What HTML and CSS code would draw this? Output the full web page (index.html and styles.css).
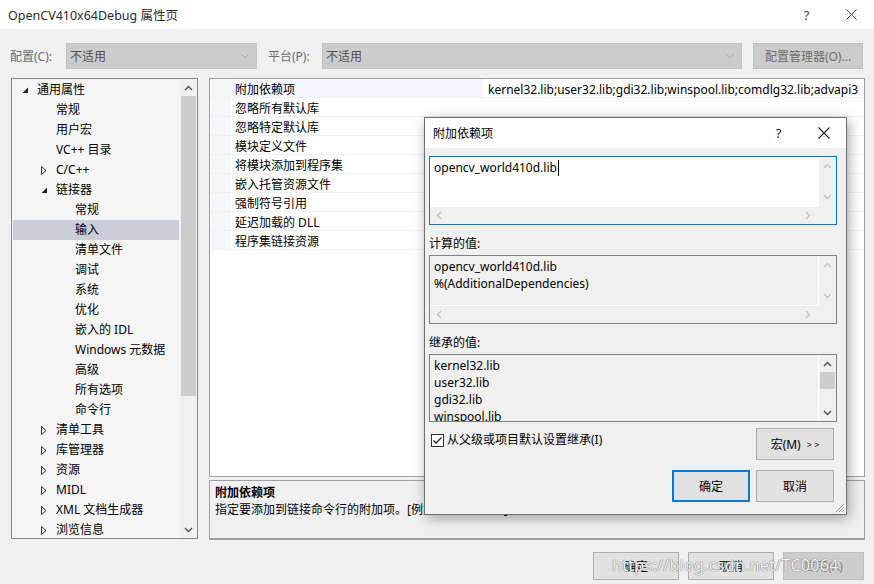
FILE: index.html
```html
<!DOCTYPE html>
<html>
<head>
<meta charset="utf-8">
<link rel="stylesheet" href="styles.css">
</head>
<body>
<div class="window">
  <div class="titlebar">
    <span class="title">OpenCV410x64Debug 属性页</span>
    <span class="cap-btn">?</span>
    <span class="cap-btn"><svg width="11" height="11" viewBox="0 0 11 11"><path d="M0.5 0.5 L10.5 10.5 M10.5 0.5 L0.5 10.5" stroke="#444" stroke-width="1" fill="none"/></svg></span>
  </div>

  <div class="toolbar">
    <span class="tlabel">配置(C):</span>
    <div class="select sel1"><span>不适用</span><svg width="8" height="5" viewBox="0 0 8 5"><path d="M0.5 0.5 L4 4 L7.5 0.5" stroke="#a8a8a8" fill="none"/></svg></div>
    <span class="tlabel tlabel2">平台(P):</span>
    <div class="select sel2"><span>不适用</span><svg width="8" height="5" viewBox="0 0 8 5"><path d="M0.5 0.5 L4 4 L7.5 0.5" stroke="#a8a8a8" fill="none"/></svg></div>
    <div class="tbtn">配置管理器(O)...</div>
  </div>

  <div class="main">
    <div class="tree">
      <div class="tree-list">
        <div class="trow l0"><span class="tw"><svg width="7" height="7" viewBox="0 0 7 7"><path d="M6 0.5 L6 6 L0.5 6 Z" fill="#222"/></svg></span><span>通用属性</span></div>
        <div class="trow l1"><span class="tw"></span><span>常规</span></div>
        <div class="trow l1"><span class="tw"></span><span>用户宏</span></div>
        <div class="trow l1"><span class="tw"></span><span>VC++ 目录</span></div>
        <div class="trow l1"><span class="tw"><svg width="6" height="9" viewBox="0 0 6 9"><path d="M0.5 0.5 L5 4.5 L0.5 8.5 Z" fill="none" stroke="#333"/></svg></span><span>C/C++</span></div>
        <div class="trow l1"><span class="tw"><svg width="7" height="7" viewBox="0 0 7 7"><path d="M6 0.5 L6 6 L0.5 6 Z" fill="#222"/></svg></span><span>链接器</span></div>
        <div class="trow l2"><span class="tw"></span><span>常规</span></div>
        <div class="trow l2 sel"><span class="tw"></span><span>输入</span></div>
        <div class="trow l2"><span class="tw"></span><span>清单文件</span></div>
        <div class="trow l2"><span class="tw"></span><span>调试</span></div>
        <div class="trow l2"><span class="tw"></span><span>系统</span></div>
        <div class="trow l2"><span class="tw"></span><span>优化</span></div>
        <div class="trow l2"><span class="tw"></span><span>嵌入的 IDL</span></div>
        <div class="trow l2"><span class="tw"></span><span>Windows 元数据</span></div>
        <div class="trow l2"><span class="tw"></span><span>高级</span></div>
        <div class="trow l2"><span class="tw"></span><span>所有选项</span></div>
        <div class="trow l2"><span class="tw"></span><span>命令行</span></div>
        <div class="trow l1"><span class="tw"><svg width="6" height="9" viewBox="0 0 6 9"><path d="M0.5 0.5 L5 4.5 L0.5 8.5 Z" fill="none" stroke="#333"/></svg></span><span>清单工具</span></div>
        <div class="trow l1"><span class="tw"><svg width="6" height="9" viewBox="0 0 6 9"><path d="M0.5 0.5 L5 4.5 L0.5 8.5 Z" fill="none" stroke="#333"/></svg></span><span>库管理器</span></div>
        <div class="trow l1"><span class="tw"><svg width="6" height="9" viewBox="0 0 6 9"><path d="M0.5 0.5 L5 4.5 L0.5 8.5 Z" fill="none" stroke="#333"/></svg></span><span>资源</span></div>
        <div class="trow l1"><span class="tw"><svg width="6" height="9" viewBox="0 0 6 9"><path d="M0.5 0.5 L5 4.5 L0.5 8.5 Z" fill="none" stroke="#333"/></svg></span><span>MIDL</span></div>
        <div class="trow l1"><span class="tw"><svg width="6" height="9" viewBox="0 0 6 9"><path d="M0.5 0.5 L5 4.5 L0.5 8.5 Z" fill="none" stroke="#333"/></svg></span><span>XML 文档生成器</span></div>
        <div class="trow l1"><span class="tw"><svg width="6" height="9" viewBox="0 0 6 9"><path d="M0.5 0.5 L5 4.5 L0.5 8.5 Z" fill="none" stroke="#333"/></svg></span><span>浏览信息</span></div>
      </div>
      <div class="vscroll">
        <div class="sarrow"><svg width="9" height="6" viewBox="0 0 9 6"><path d="M1 5 L4.5 1.5 L8 5" fill="none" stroke="#555" stroke-width="1.4"/></svg></div>
        <div class="sthumb"></div>
        <div class="sspace"></div>
        <div class="sarrow"><svg width="9" height="6" viewBox="0 0 9 6"><path d="M1 1 L4.5 4.5 L8 1" fill="none" stroke="#555" stroke-width="1.4"/></svg></div>
      </div>
    </div>

    <div class="rightcol">
      <div class="grid">
        <div class="grow first"><span class="gm"></span><span class="gl">附加依赖项</span><span class="gv">kernel32.lib;user32.lib;gdi32.lib;winspool.lib;comdlg32.lib;advapi3</span></div>
        <div class="grow"><span class="gm"></span><span class="gl">忽略所有默认库</span><span class="gv"></span></div>
        <div class="grow"><span class="gm"></span><span class="gl">忽略特定默认库</span><span class="gv"></span></div>
        <div class="grow"><span class="gm"></span><span class="gl">模块定义文件</span><span class="gv"></span></div>
        <div class="grow"><span class="gm"></span><span class="gl">将模块添加到程序集</span><span class="gv"></span></div>
        <div class="grow"><span class="gm"></span><span class="gl">嵌入托管资源文件</span><span class="gv"></span></div>
        <div class="grow"><span class="gm"></span><span class="gl">强制符号引用</span><span class="gv"></span></div>
        <div class="grow"><span class="gm"></span><span class="gl">延迟加载的 DLL</span><span class="gv"></span></div>
        <div class="grow"><span class="gm"></span><span class="gl">程序集链接资源</span><span class="gv"></span></div>
      </div>
      <div class="desc">
        <div class="desc-title">附加依赖项</div>
        <div>指定要添加到链接命令行的附加项。[例如 kernel32.lib]</div>
      </div>
    </div>
  </div>

  <div class="footer">
    <div class="btn fbtn">确定</div>
    <div class="btn fbtn">取消</div>
    <div class="btn fbtn disabled">应用(A)</div>
  </div>

  <div class="watermark">https://blog.csdn.net/TC0064</div>

  <div class="dialog">
    <div class="dlg-title">
      <span class="dlg-caption">附加依赖项</span>
      <span class="dlg-cap">?</span>
      <span class="dlg-cap"><svg width="12" height="12" viewBox="0 0 12 12"><path d="M0.5 0.5 L11.5 11.5 M11.5 0.5 L0.5 11.5" stroke="#222" stroke-width="1.1" fill="none"/></svg></span>
    </div>
    <div class="dlg-body">
      <div class="ebox focus">
        <div class="econtent white"><span>opencv_world410d.lib</span><span class="caret"></span></div>
        <div class="evs">
          <svg width="9" height="6" viewBox="0 0 9 6"><path d="M1 5 L4.5 1.5 L8 5" fill="none" stroke="#c2c2c2" stroke-width="1.3"/></svg>
          <svg width="9" height="6" viewBox="0 0 9 6"><path d="M1 1 L4.5 4.5 L8 1" fill="none" stroke="#c2c2c2" stroke-width="1.3"/></svg>
        </div>
        <div class="ehs">
          <svg width="6" height="9" viewBox="0 0 6 9"><path d="M5 1 L1.5 4.5 L5 8" fill="none" stroke="#c2c2c2" stroke-width="1.3"/></svg>
          <svg width="6" height="9" viewBox="0 0 6 9"><path d="M1 1 L4.5 4.5 L1 8" fill="none" stroke="#c2c2c2" stroke-width="1.3"/></svg>
        </div>
        <div class="ecorner"></div>
      </div>

      <div class="dlabel">计算的值:</div>
      <div class="ebox">
        <div class="econtent sep"><div>opencv_world410d.lib</div><div>%(AdditionalDependencies)</div></div>
        <div class="evs">
          <svg width="9" height="6" viewBox="0 0 9 6"><path d="M1 5 L4.5 1.5 L8 5" fill="none" stroke="#c2c2c2" stroke-width="1.3"/></svg>
          <svg width="9" height="6" viewBox="0 0 9 6"><path d="M1 1 L4.5 4.5 L8 1" fill="none" stroke="#c2c2c2" stroke-width="1.3"/></svg>
        </div>
        <div class="ehs">
          <svg width="6" height="9" viewBox="0 0 6 9"><path d="M5 1 L1.5 4.5 L5 8" fill="none" stroke="#c2c2c2" stroke-width="1.3"/></svg>
          <svg width="6" height="9" viewBox="0 0 6 9"><path d="M1 1 L4.5 4.5 L1 8" fill="none" stroke="#c2c2c2" stroke-width="1.3"/></svg>
        </div>
        <div class="ecorner"></div>
      </div>

      <div class="dlabel">继承的值:</div>
      <div class="ebox inh">
        <div class="econtent sep"><div>kernel32.lib</div><div>user32.lib</div><div>gdi32.lib</div><div>winspool.lib</div></div>
        <div class="evs2">
          <div class="sarrow2"><svg width="9" height="6" viewBox="0 0 9 6"><path d="M1 5 L4.5 1.5 L8 5" fill="none" stroke="#505050" stroke-width="1.5"/></svg></div>
          <div class="ithumb"></div>
          <div class="sspace"></div>
          <div class="sarrow2"><svg width="9" height="6" viewBox="0 0 9 6"><path d="M1 1 L4.5 4.5 L8 1" fill="none" stroke="#505050" stroke-width="1.5"/></svg></div>
        </div>
      </div>

      <div class="dlg-row">
        <label class="chk">
          <svg width="13" height="13" viewBox="0 0 13 13"><rect x="0.5" y="0.5" width="12" height="12" fill="#fff" stroke="#333"/><path d="M2.5 6.5 L5 9 L10.5 3.5" fill="none" stroke="#222" stroke-width="1.3"/></svg>
          <span>从父级或项目默认设置继承(I)</span>
        </label>
        <div class="btn dbtn">宏(M) <span class="gg">&gt; &gt;</span></div>
      </div>
      <div class="dlg-actions">
        <div class="btn dbtn primary">确定</div>
        <div class="btn dbtn">取消</div>
      </div>
    </div>
    <svg class="grip" width="12" height="12" viewBox="0 0 12 12"><path d="M11 3 L3 11 M11 6 L6 11 M11 9 L9 11" stroke="#a0a0a0" stroke-width="1"/></svg>
  </div>
</div>
</body>
</html>
```

FILE: styles.css
```css
* { box-sizing: border-box; }
html, body { margin: 0; padding: 0; }
body {
  width: 874px;
  height: 584px;
  overflow: hidden;
  background: #f0f0f0;
  font-family: "Noto Sans", "Noto Sans CJK SC", sans-serif;
  font-size: 12px;
  color: #000;
}
.window { position: relative; width: 874px; height: 584px; }

/* title bar */
.titlebar {
  height: 29px;
  background: #fff;
  display: flex;
  align-items: center;
  padding-left: 8px;
}
.title { flex: 1; font-size: 12.5px; color: #2b2b2b; }
.cap-btn {
  width: 45px;
  height: 29px;
  display: flex;
  align-items: center;
  justify-content: center;
  color: #444;
  font-size: 13px;
}

/* toolbar */
.toolbar {
  display: flex;
  align-items: center;
  height: 26px;
  margin-top: 14px;
  padding-left: 10px;
}
.tlabel { width: 56px; color: #6d6d6d; white-space: nowrap; }
.tlabel2 { margin-left: 11px; width: 54px; }
.select {
  height: 26px;
  background: #cccccc;
  border: 1px solid #c4c4c4;
  display: flex;
  align-items: center;
  justify-content: space-between;
  padding: 0 7px 0 3px;
  color: #505050;
}
.sel1 { width: 191px; }
.sel2 { width: 420px; }
.tbtn {
  margin-left: 11px;
  width: 110px;
  height: 26px;
  background: #cccccc;
  border: 1px solid #bfbfbf;
  color: #6d6d6d;
  display: flex;
  align-items: center;
  justify-content: center;
  white-space: nowrap;
}

/* main */
.main {
  display: flex;
  margin-top: 9px;
  height: 462px;
  padding-left: 11px;
}
.tree {
  width: 187px;
  height: 461px;
  border: 1px solid #828790;
  background: #f5f5f5;
  display: flex;
}
.tree-list { flex: 1; overflow: hidden; padding-left: 1px; padding-top: 1px; }
.trow {
  height: 20px;
  display: flex;
  align-items: center;
  white-space: nowrap;
  line-height: 20px;
}
.trow.sel { background: #cbcdd9; margin-right: 1px; }
.tw { width: 19px; height: 20px; display: flex; align-items: center; padding-left: 4px; }
.l0 { padding-left: 5px; }
.l1 { padding-left: 24px; }
.l2 { padding-left: 43px; }

.vscroll { width: 17px; background: #f0f0f0; display: flex; flex-direction: column; }
.sarrow { height: 17px; display: flex; align-items: center; justify-content: center; }
.sthumb { height: 300px; background: #cdcdcd; margin: 0 1px; }
.sspace { flex: 1; }

.rightcol { margin-left: 11px; width: 656px; display: flex; flex-direction: column; }
.grid { height: 399px; border: 1px solid #a0a0a0; background: #fff; overflow: hidden; }
.grow { display: flex; height: 19px; border-bottom: 1px solid #eef1f6; line-height: 21px; white-space: nowrap; }
.gm { width: 21px; flex: none; background: #f5f7fb; }
.gl { width: 252px; flex: none; padding-left: 4px; }
.grow.first .gl { background: #f3f6fb; }
.gv { flex: 1; padding-left: 5px; overflow: hidden; }

.desc {
  margin-top: 3px;
  height: 60px;
  border: 1px solid #a0a0a0;
  border-bottom-width: 2px;
  padding: 3px 5px 2px;
  line-height: 17px;
  white-space: nowrap;
  overflow: hidden;
}
.desc-title { font-weight: bold; }

/* footer */
.footer {
  display: flex;
  justify-content: flex-end;
  gap: 9px;
  margin-top: 12px;
  padding-right: 10px;
}
.btn {
  background: #e1e1e1;
  border: 1px solid #adadad;
  display: flex;
  align-items: center;
  justify-content: center;
  white-space: nowrap;
}
.fbtn { width: 86px; height: 28px; }
.fbtn.disabled { width: 81px; background: #cccccc; border-color: #bfbfbf; color: #8a8a8a; }

.watermark {
  position: absolute;
  left: 612px;
  top: 554px;
  font-size: 16px;
  color: rgba(255,255,255,0.9);
  text-shadow: 0 0 1px #777, 0 0 1px #777;
  letter-spacing: 0.3px;
  white-space: nowrap;
}

/* dialog */
.dialog {
  position: absolute;
  left: 424px;
  top: 117px;
  width: 423px;
  height: 398px;
  background: #f0f0f0;
  border: 1px solid #6e6e6e;
  box-shadow: 2px 3px 12px rgba(0,0,0,0.35);
}
.dlg-title {
  height: 30px;
  background: #fff;
  display: flex;
  align-items: center;
  padding-left: 8px;
}
.dlg-caption { flex: 1; font-size: 12px; }
.dlg-cap {
  width: 45px;
  height: 30px;
  display: flex;
  align-items: center;
  justify-content: center;
  font-size: 13px;
  color: #222;
}
.dlg-body { padding: 8px 9px 0 4px; }
.ebox {
  height: 69px;
  border: 1px solid #828282;
  display: grid;
  grid-template-columns: 1fr 17px;
  grid-template-rows: 1fr 17px;
  background: #f0f0f0;
}
.ebox.focus { border-color: #0078d7; }
.econtent { padding: 1px 4px; line-height: 17px; white-space: nowrap; overflow: hidden; }
.econtent.white { background: #fff; display: flex; align-items: flex-start; padding-top: 2px; }
.econtent.sep { border-right: 1px solid #fff; border-bottom: 1px solid #fff; padding-top: 2px; }
.caret { display: inline-block; width: 1px; height: 16px; background: #000; margin-left: 1px; margin-top: 1px; }
.evs { display: flex; flex-direction: column; justify-content: space-between; align-items: center; padding: 6px 0 7px; }
.ehs { display: flex; justify-content: space-between; align-items: center; padding: 0 8px 0 6px; }
.ecorner { background: #f0f0f0; }
.ebox.inh { height: 68px; grid-template-rows: 1fr; margin-top: 3px; }
.ebox.inh .econtent.sep { border-bottom: none; }
.evs2 { display: flex; flex-direction: column; }
.sarrow2 { height: 17px; display: flex; align-items: center; justify-content: center; }
.ithumb { height: 17px; background: #cdcdcd; margin: 0 1px; }
.dlabel { margin-top: 10px; line-height: 17px; height: 17px; }
.dlabel + .ebox { margin-top: 3px; }

.dlg-row { display: flex; justify-content: space-between; align-items: flex-start; margin-top: 6px; padding-right: 3px; }
.chk { display: flex; align-items: center; gap: 3px; margin-top: 4px; margin-left: 2px; line-height: 16px; }
.chk svg { flex: none; }
.dbtn { width: 78px; height: 32px; }
.gg { font-size: 9px; margin-left: 6px; }
.dlg-actions { display: flex; justify-content: flex-end; gap: 6px; margin-top: 10px; padding-right: 3px; }
.dbtn.primary { border: 2px solid #0078d7; }
.grip { position: absolute; right: 1px; bottom: 1px; }
```
